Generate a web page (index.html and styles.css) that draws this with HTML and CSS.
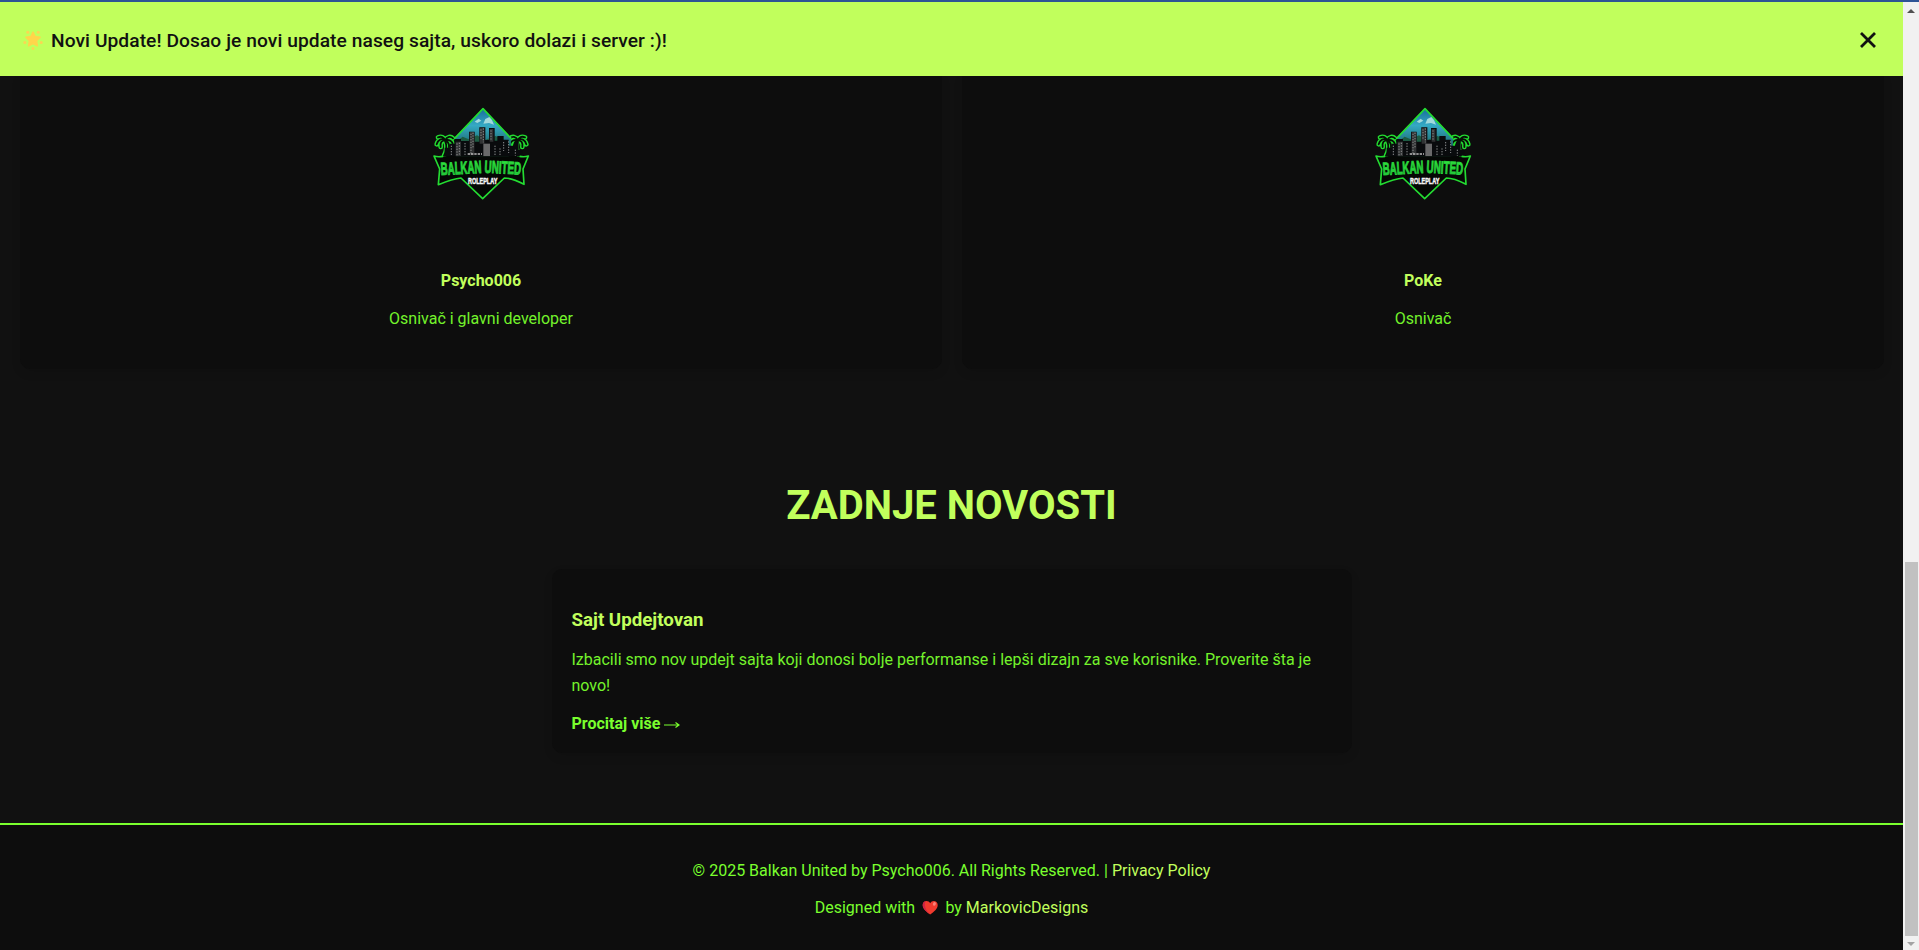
FILE: index.html
```html
<!DOCTYPE html>
<html lang="sr">
<head>
<meta charset="utf-8">
<title>Balkan United</title>
<link rel="stylesheet" href="styles.css">
</head>
<body>
<svg width="0" height="0" class="defs" aria-hidden="true">
  <defs>
    <linearGradient id="sky" x1="0" y1="0" x2="0" y2="1"><stop offset="0" stop-color="#176d9b"/><stop offset=".35" stop-color="#35a9c4"/><stop offset=".65" stop-color="#237d86"/><stop offset="1" stop-color="#0d3238"/></linearGradient>
    <linearGradient id="lime" x1="0" y1="0" x2="0" y2="1"><stop offset="0" stop-color="#3bea3e"/><stop offset=".5" stop-color="#2bdc3a"/><stop offset="1" stop-color="#1cab3f"/></linearGradient>
    <g id="palm" fill="none" stroke-linecap="round" stroke-linejoin="round">
      <path d="M72 182C80 168 82 154 75 136M75 136C65 128 54 134 50 148M75 136C65 136 60 143 62 156M75 136C72 126 64 123 54 127M75 136C82 124 92 123 99 130M75 136C88 133 98 138 99 150M75 136C83 139 88 147 87 157" stroke="#23dd31" stroke-width="14"/>
      <path d="M72 182C80 168 82 154 75 136M75 136C65 128 54 134 50 148M75 136C65 136 60 143 62 156M75 136C72 126 64 123 54 127M75 136C82 124 92 123 99 130M75 136C88 133 98 138 99 150M75 136C83 139 88 147 87 157" stroke="#061006" stroke-width="5.500"/>
    </g>
    <symbol id="logo" viewBox="0 0 360 345">
      <use href="#palm"/>
      <use href="#palm" transform="translate(369 0) scale(-1 1)"/>
      <path d="M189 41L105 128V184H273V128Z" fill="url(#sky)"/>
      <path d="M190 86l6-14 12-6 8 9 6 14-15-5zM164 80l12-9 8 6-12 7z" fill="#a2d9dc"/>
      <path d="M108 141l20-16 18 8 25-12 24 14 32-12 39 20v42H108z" fill="#1d5c43"/>
      <path d="M74 184v-26h15v-12h14v-14h20v6h24v-28h17v30h14V97h18v38h11V99h17v38h8v-14h19v11h15v18h17v-12h13v25h11v19z" fill="#090b0d"/>
      <path d="M107 140h16v44h-16zM149 111h14v70h-14zM179 98h14v48h-14zM209 102h11v38h-11z" fill="#303233"/>
      <path d="M190 146h20v38h-20z" fill="#69696a"/>
      <g stroke="#8c8f90" stroke-width="3" stroke-dasharray="4 4"><path d="M111 145v37M118 143v39M153 116v61M159 113v44M183 103v32M190 100v42M213 106v29M94 152v30M225 152v30M240 160v23M266 139v35M286 164v18M135 144v36M251 141v27"/></g>
      <path d="M143 177h43" stroke="#bbb" stroke-width="5" stroke-dasharray="7 3"/>
      <path d="M42 183Q62 190 75 184H291Q307 190 325 183L309 222L312 268Q276 249 253 249L188 311L123 249Q99 251 55 269L59 222Z" fill="#050705"/>
      <path d="M104 130L189 41L273 130M69 184Q54 187 42 183L59 222L55 269Q99 251 123 249L188 311L253 249Q276 249 312 268L309 222L325 183Q313 187 299 184" fill="none" stroke="#24dc32" stroke-width="5" stroke-linejoin="round"/>
      <g class="logo-name" fill="url(#lime)">
        <text x="63" y="240" textLength="122" lengthAdjust="spacingAndGlyphs" transform="rotate(-3 63 240)">BALKAN</text>
        <text x="193" y="233" textLength="110" lengthAdjust="spacingAndGlyphs" transform="rotate(3 193 233)">UNITED</text>
      </g>
      <text class="logo-sub" x="144" y="268" textLength="88" lengthAdjust="spacingAndGlyphs" fill="#f5f5f5">ROLEPLAY</text>
    </symbol>
  </defs>
</svg>
<div class="window">
  <div class="page">
    <div class="banner">
      <svg class="star" viewBox="0 0 20 20"><path d="M10 2.200l2.100 4.300 5 .7-3.600 3.500.9 5.100L10 13.600l-4.400 2.200.9-5.100-3.600-3.500 5-.7z" fill="#ffd54b" stroke="#ffd54b" stroke-width="1.500" stroke-linejoin="round"/><g fill="#fbd751"><circle cx="4.800" cy="2.200" r="1.500"/><circle cx="15.200" cy="2.200" r="1.500"/><circle cx="1.800" cy="12.500" r="1.500"/><circle cx="18.200" cy="12.500" r="1.500"/><circle cx="10" cy="18.400" r="1.500"/></g></svg>
      <span class="banner-text">Novi Update! Dosao je novi update naseg sajta, uskoro dolazi i server :)!</span>
      <svg class="close" viewBox="0 0 18 18"><path d="M2 2l14 14M16 2L2 16" stroke="#111" stroke-width="2.800" fill="none"/></svg>
    </div>
    <div class="team">
      <div class="member"><svg class="logo"><use href="#logo"/></svg><h4>Psycho006</h4><p>Osnivač i glavni developer</p></div>
      <div class="member"><svg class="logo"><use href="#logo"/></svg><h4>PoKe</h4><p>Osnivač</p></div>
    </div>
    <section class="news">
      <h2>ZADNJE NOVOSTI</h2>
      <article class="post">
        <h3>Sajt Updejtovan</h3>
        <p>Izbacili smo nov updejt sajta koji donosi bolje performanse i lepši dizajn za sve korisnike. Proverite šta je novo!</p>
        <a class="more">Procitaj više <svg class="arrow" viewBox="0 0 16 8"><path d="M0 4h15M11.500 1.500L15 4l-3.500 2.500" fill="none" stroke="currentColor" stroke-width="1.200"/></svg></a>
      </article>
    </section>
    <footer>
      <p>© 2025 Balkan United by Psycho006. All Rights Reserved. | <a>Privacy Policy</a></p>
      <p>Designed with <svg class="heart" viewBox="0 0 20 16"><path d="M10 15.500C6 12.500 2 9.500 2 5.300 2 .5 8-.5 10 3.400 12-.5 18 .5 18 5.300c0 4.200-4 7.200-8 10.200z" fill="#f03a2e"/><path d="M10 15.500C6 12.500 2 9.500 2 5.300 2 3 3.500 1.300 5.200 1 3 5 5 11 10 15.500z" fill="#cf2444"/><ellipse cx="14.500" cy="4.200" rx="1.500" ry="2" fill="#f88379" transform="rotate(25 14.500 4.200)"/></svg> by <a>MarkovicDesigns</a></p>
    </footer>
  </div>
  <div class="scrollbar"><i class="up"></i><div class="thumb"></div><i class="down"></i></div>
</div>
</body>
</html>
```
FILE: styles.css
```css
* { box-sizing: border-box; }
body {
  margin: 0;
  background: #111;
  color: #7aff2e;
  font: 16px/1.6 Roboto, sans-serif;
  overflow: hidden;
}
h2, h3, h4, p { margin: 0; }
.defs { display: block; }
.window {
  display: flex;
  height: 950px;
  border-top: 2px solid #2e5496;
}
.page { width: 1903px; display: flex; flex-direction: column; overflow: hidden; }
.banner {
  display: flex;
  align-items: center;
  flex: none;
  height: 74px;
  padding: 4px 26.5px 0 23px;
  background: #c1ff5c;
  color: #111;
  font-size: 19.2px;
  font-weight: 500;
  letter-spacing: .07px;
  position: relative;
  z-index: 1;
}
.star { width: 20px; height: 20px; margin: -2px 8px 0 0; }
.close { width: 18px; height: 18px; margin: -2px 0 0 auto; }
.team { display: flex; gap: 20px; padding: 0 19px 0 20px; height: 293px; flex: none; }
.member {
  flex: 1;
  display: flex;
  flex-direction: column;
  align-items: center;
  padding-top: 19px;
  background: #0d0d0d;
  border-radius: 0 0 10px 10px;
  box-shadow: 0 4px 10px rgba(0, 0, 0, .1);
}
.logo { width: 120px; height: 115px; margin-left: -2px; }
.logo-name { font: bold 53px "Liberation Sans", sans-serif; stroke: #25cf3a; stroke-width: 3px; }
.logo-sub { font: bold 27px "Liberation Sans", sans-serif; stroke: #f5f5f5; stroke-width: 1.5px; }
.member h4 { margin-top: 58px; color: #c1ff5c; font-size: 16px; }
.member p { margin-top: 12px; opacity: .95; }
.news { padding-top: 105px; height: 454px; flex: none; }
.news h2 { color: #c1ff5c; font-size: 40px; line-height: 64px; text-align: center; }
.post {
  width: 800px;
  height: 184px;
  margin: 31px auto 0;
  padding: 36px 20px 0;
  background: #0d0d0d;
  border-radius: 10px;
  box-shadow: 0 4px 10px rgba(0, 0, 0, .1);
}
.post h3 { color: #c1ff5c; font-size: 18.72px; line-height: 30px; }
.post p { margin-top: 12px; opacity: .95; }
.more { display: block; margin-top: 13px; font-weight: 700; }
.arrow { width: 16px; height: 8px; }
footer { flex: 1; padding-top: 33px; border-top: 2px solid #7aff2e; background: #0d0d0d; text-align: center; }
footer p + p { margin-top: 11px; }
footer a { color: #c1ff5c; }
.heart { width: 22.4px; height: 15px; vertical-align: -2px; }
.scrollbar { width: 16px; background: #f1f1f1; display: flex; flex-direction: column; align-items: center; }
.up, .down { border: 4px solid transparent; width: 0; height: 0; }
.up { border-top: 0; border-bottom-color: #505050; margin-top: 7px; }
.thumb { width: 13px; height: 374px; margin-top: auto; background: #c1c1c1; }
.down { border-bottom: 0; border-top-color: #a3a3a3; margin: 6px 0 4px; }
```
